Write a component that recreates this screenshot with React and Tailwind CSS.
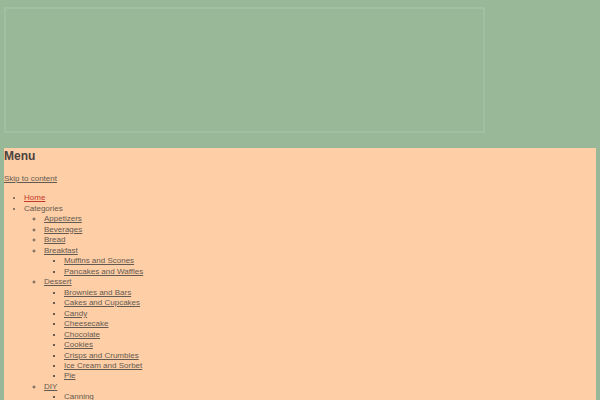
import React from "react";

const L = ({ children, red }) => (
  <a href="#" className={red ? "underline text-[#c4382a]" : "underline text-[#655a51]"}>{children}</a>
);

export default function App() {
  return (
    <div className="min-h-[400px] bg-[#99b898] p-1 text-[8px] leading-[10.47px] text-[#655a51]" style={{ fontFamily: '"Liberation Sans", Arial, sans-serif' }}>
      <div className="mt-[3px] h-[126px] w-[481px] border-2 border-white/10"></div>
      <div className="mt-[15px] bg-[#fecea6] min-h-[260px]">
        <h2 className="text-[12px] leading-[16px] font-bold text-[#4a433e]">Menu</h2>
        <div className="mt-[10px]"><L>Skip to content</L></div>
        <ul className="mt-[9px] list-disc pl-5">
          <li><L red>Home</L></li>
          <li>Categories
            <ul className="list-[circle] pl-5">
              <li><L>Appetizers</L></li>
              <li><L>Beverages</L></li>
              <li><L>Bread</L></li>
              <li><L>Breakfast</L>
                <ul className="list-[square] pl-5">
                  <li><L>Muffins and Scones</L></li>
                  <li><L>Pancakes and Waffles</L></li>
                </ul>
              </li>
              <li><L>Dessert</L>
                <ul className="list-[square] pl-5">
                  <li><L>Brownies and Bars</L></li>
                  <li><L>Cakes and Cupcakes</L></li>
                  <li><L>Candy</L></li>
                  <li><L>Cheesecake</L></li>
                  <li><L>Chocolate</L></li>
                  <li><L>Cookies</L></li>
                  <li><L>Crisps and Crumbles</L></li>
                  <li><L>Ice Cream and Sorbet</L></li>
                  <li><L>Pie</L></li>
                </ul>
              </li>
              <li><L>DIY</L>
                <ul className="list-[square] pl-5">
                  <li><L>Canning</L></li>
                  <li><L>Preserves</L></li>
                </ul>
              </li>
            </ul>
          </li>
        </ul>
      </div>
    </div>
  );
}
